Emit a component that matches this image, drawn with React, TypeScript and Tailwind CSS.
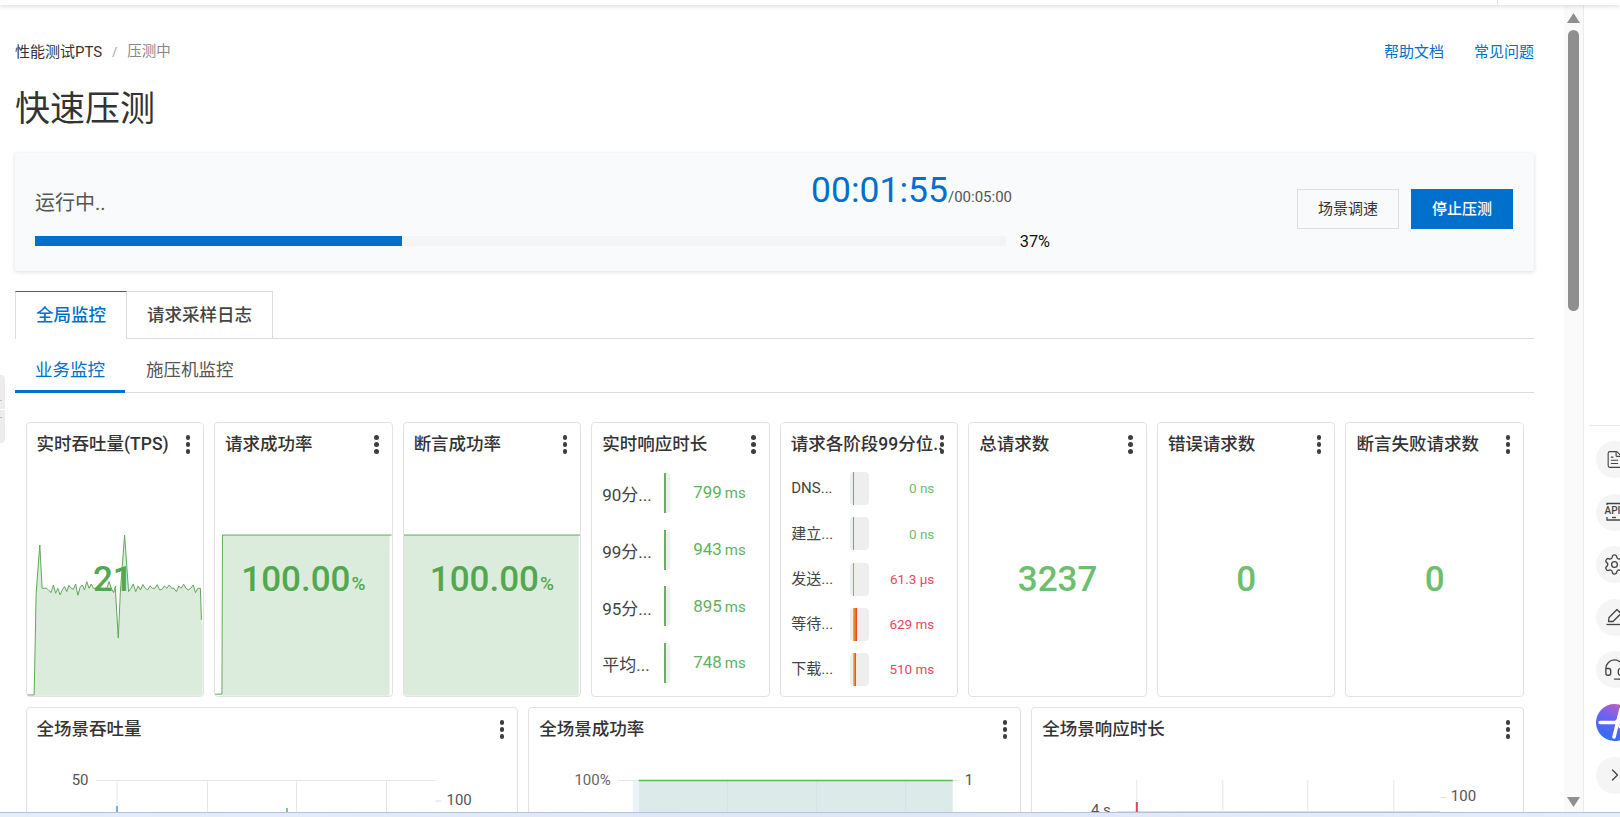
import { ChevronRight, FileText, Headset, Settings } from "lucide-react";

const tpsYs = [925,925,932,938,915,940,925,945,930,920,935,916,925,928,912,946,922,915,930,905,925,912,925,925,925,925,925,925,925,905,925,938,918];
const tpsTail = [925,912,935,918,930,914,925,930,918,925,925,914,930,928,918,925,915,925,925,935,918,925,913,925,930,925,915,938,925];

function buildTps() {
  const pts: [number, number][] = [[77, 1246], [101, 1246], [107, 940], [118, 795], [125, 925]];
  tpsYs.forEach((y, i) => pts.push([132 + i * 6.7, y]));
  pts.push([345, 925], [354, 1075], [360, 940], [373, 765], [385, 935]);
  tpsTail.forEach((y, i) => pts.push([392 + i * 7.2, y]));
  pts.push([601, 925], [604, 1020]);
  return pts.map(([x, y]) => [x / 3 - 27.5, 280 + y / 3 - 424] as [number, number]);
}

function Kebab() {
  return (
    <div className="absolute right-[13px] top-[12px] z-10 flex flex-col gap-[2.5px]">
      <span className="size-[4.5px] rounded-full bg-[#3d3d3d]" />
      <span className="size-[4.5px] rounded-full bg-[#3d3d3d]" />
      <span className="size-[4.5px] rounded-full bg-[#3d3d3d]" />
    </div>
  );
}

function Card({ title, children }: { title: string; children?: React.ReactNode }) {
  return (
    <div className="relative flex h-[275px] min-w-0 flex-col overflow-hidden rounded-[4px] border border-[#e2e2e2] bg-white">
      <div className="relative z-10 h-[41px] shrink-0 whitespace-nowrap pl-[10px] pt-[9px] text-[17.5px] leading-[24px] font-medium text-[#333]">{title}</div>
      <Kebab />
      {children}
    </div>
  );
}

function TpsChart() {
  const pts = buildTps();
  const line = pts.map((p) => p.join(",")).join(" ");
  const fill = `6,272 ${pts.slice(1).map((p) => p.join(",")).join(" ")} 175,200 175,272`;
  return (
    <svg className="absolute inset-0 size-full" viewBox="-1 -1 177 273" fill="none">
      <polygon points={fill} fill="#dcecdc" />
      <polyline points={line} stroke="#5fa857" strokeWidth="1" />
    </svg>
  );
}

function RateChart({ full }: { full?: boolean }) {
  return (
    <svg className="absolute inset-0 size-full" viewBox="-1 -1 177 273" fill="none">
      {full ? (
        <>
          <rect x="-1" y="111" width="175" height="161" fill="#dcecdc" />
          <line x1="-1" y1="111" x2="176" y2="111" stroke="#5fa857" />
        </>
      ) : (
        <>
          <rect x="6.5" y="111" width="167.5" height="161" fill="#dcecdc" />
          <polyline points="-1,270.5 6,270.5 6.5,111 176,111" stroke="#5fa857" />
        </>
      )}
    </svg>
  );
}

function BigValue({ value, unit, color }: { value: string; unit?: string; color: string }) {
  return (
    <div className={`relative flex flex-1 items-center justify-center pb-[2px] font-medium ${color}`}>
      <span className="text-[35px] leading-none">{value}</span>
      {unit && <span className="mt-[9px] ml-[1px] text-[19px] leading-none">{unit}</span>}
    </div>
  );
}

const responseRows = [
  ["90分...", "799"],
  ["99分...", "943"],
  ["95分...", "895"],
  ["平均...", "748"],
];

function ResponseBody() {
  return (
    <div className="flex flex-1 flex-col justify-between pt-[9px] pb-[13px] pl-[10px] pr-[23px]">
      {responseRows.map(([label, value]) => (
        <div key={label} className="flex h-[40px] items-center">
          <span className="mt-[6px] w-[62px] whitespace-nowrap text-[17px] text-[#444]">{label}</span>
          <div className="h-[40px] w-[6px] rounded-[3px] bg-[#efefef]">
            <div className="h-full w-[1.5px] bg-[#6cae64]" />
          </div>
          <span className="ml-auto whitespace-nowrap text-[#62b15e]">
            <span className="text-[17px]">{value}</span>
            <span className="ml-[3px] text-[15px]">ms</span>
          </span>
        </div>
      ))}
    </div>
  );
}

const phaseRows = [
  { label: "DNS...", value: "0 ns", bad: false, bar: "ml-[3px] w-[1px] bg-[#5cb85c]" },
  { label: "建立...", value: "0 ns", bad: false, bar: "ml-[3px] w-[1px] bg-[#5cb85c]" },
  { label: "发送...", value: "61.3 μs", bad: true, bar: "ml-[3px] w-[1px] bg-[#f08a24]" },
  { label: "等待...", value: "629 ms", bad: true, bar: "ml-[3px] w-[3.5px] bg-linear-to-r from-[#f5b41e] to-[#e0352b]" },
  { label: "下载...", value: "510 ms", bad: true, bar: "ml-[2.5px] w-[3.5px] bg-linear-to-r from-[#f5c842] to-[#e0352b]" },
];

function PhaseBody() {
  return (
    <div className="flex flex-1 flex-col justify-between pt-[8px] pb-[10px] pl-[10.5px] pr-[23px]">
      {phaseRows.map((r) => (
        <div key={r.label} className="flex h-[33px] items-center">
          <span className="w-[59px] whitespace-nowrap text-[15px] text-[#444]">{r.label}</span>
          <div className="h-[33px] w-[19px] overflow-hidden rounded-[4px] bg-[#eeeeee]">
            <div className={`h-full ${r.bar}`} />
          </div>
          <span className={`ml-auto whitespace-nowrap text-[13.5px] ${r.bad ? "text-[#e8485f]" : "text-[#6cc06c]"}`}>{r.value}</span>
        </div>
      ))}
    </div>
  );
}

function ThroughputChart() {
  return (
    <svg className="absolute left-0 top-0" width="491" height="273" viewBox="26.5 708 491 273" fill="none">
      <text x="88" y="785" textAnchor="end" fontSize="15" fill="#555">50</text>
      <line x1="95.5" y1="780.5" x2="435" y2="780.5" stroke="#e6e6e6" />
      {[116.5, 207, 296, 386].map((x) => (
        <line key={x} x1={x} y1="780" x2={x} y2="830" stroke="#e6e6e6" />
      ))}
      <line x1="435" y1="801" x2="441" y2="801" stroke="#dddddd" />
      <text x="446" y="805" fontSize="15" fill="#555">100</text>
      <line x1="116.5" y1="806" x2="116.5" y2="830" stroke="#5b8def" strokeWidth="1.5" />
      <line x1="286.5" y1="808" x2="286.5" y2="830" stroke="#5cb85c" strokeWidth="1.5" />
    </svg>
  );
}

function SuccessChart() {
  return (
    <svg className="absolute left-0 top-0" width="491" height="273" viewBox="529.3 708 491 273" fill="none">
      <text x="611" y="785" textAnchor="end" fontSize="15" fill="#666">100%</text>
      <line x1="618" y1="780.5" x2="960" y2="780.5" stroke="#e6e6e6" />
      <rect x="633" y="781" width="6" height="50" fill="#eaf2fc" />
      <rect x="639" y="781" width="314" height="50" fill="#dceaea" />
      {[728, 817, 906].map((x) => (
        <line key={x} x1={x} y1="781" x2={x} y2="830" stroke="#d2e2e2" />
      ))}
      <line x1="639" y1="780.5" x2="953" y2="780.5" stroke="#5cb85c" strokeWidth="1.5" />
      <text x="965" y="785" fontSize="15" fill="#555">1</text>
    </svg>
  );
}

function LatencyChart() {
  return (
    <svg className="absolute left-0 top-0" width="491" height="273" viewBox="1032.2 708 491 273" fill="none">
      {[1137, 1223, 1308, 1394].map((x) => (
        <line key={x} x1={x} y1="780" x2={x} y2="830" stroke="#e6e6e6" />
      ))}
      <line x1="1117" y1="811.5" x2="1440" y2="811.5" stroke="#dddddd" />
      <line x1="1441" y1="797.5" x2="1446" y2="797.5" stroke="#dddddd" />
      <text x="1451" y="801" fontSize="15" fill="#555">100</text>
      <text x="1111" y="815" textAnchor="end" fontSize="15" fill="#555">4 s</text>
      <line x1="1137" y1="802" x2="1137" y2="830" stroke="#e0405a" strokeWidth="2" />
    </svg>
  );
}

function Circle({ children, plain }: { children: React.ReactNode; plain?: boolean }) {
  return (
    <div className={`flex size-[37px] shrink-0 items-center justify-center rounded-full text-[#444] ${plain ? "" : "bg-[#f5f5f5]"}`}>
      {children}
    </div>
  );
}

function ApiIcon() {
  return (
    <svg width="22" height="20" viewBox="0 0 22 20" fill="none">
      <path d="M3 3V1.5h16V18H3v-3" stroke="#444" strokeWidth="1.3" />
      <text x="0.5" y="12" fontSize="10" fontWeight="500" fill="#444">API</text>
      <line x1="8" y1="15.5" x2="12" y2="15.5" stroke="#444" strokeWidth="1.3" />
    </svg>
  );
}

function PenIcon() {
  return (
    <svg width="22" height="22" viewBox="0 0 22 22" fill="none" stroke="#444" strokeWidth="1.3" strokeLinejoin="round">
      <path d="M4.5 15.5L5 11.5L13 3.5L17 7.5L9 15.5Z" />
      <line x1="2.5" y1="18.5" x2="22" y2="18.5" />
    </svg>
  );
}

function LogoIcon() {
  return (
    <svg width="37" height="37" viewBox="0 0 37 37">
      <defs>
        <linearGradient id="spark" x1="0.8" y1="0" x2="0.3" y2="1">
          <stop offset="0" stopColor="#c85fb4" />
          <stop offset="0.45" stopColor="#6f62f0" />
          <stop offset="1" stopColor="#2d6cf5" />
        </linearGradient>
      </defs>
      <circle cx="18.5" cy="18.5" r="18.5" fill="url(#spark)" />
      <path d="M4 18.5H34M25 5L18 33" stroke="#fff" strokeWidth="3.5" strokeLinecap="round" />
      <path d="M20 18L30 9M20 19L32 30" stroke="#fff" strokeWidth="3" strokeLinecap="round" />
    </svg>
  );
}

export default function App() {
  return (
    <div className="relative flex h-[817px] w-[1620px] flex-col overflow-hidden bg-white font-[Roboto,'Noto_Sans_CJK_SC',sans-serif] text-[#333]">
      <div className="relative z-20 h-[5px] shrink-0 bg-white shadow-[0_1px_5px_rgba(0,0,0,0.16)]">
        <div className="absolute left-[1497px] top-0 h-full w-px bg-[#e6e6e6]" />
      </div>

      <div className="absolute left-0 top-[375px] z-10 flex h-[68px] w-[5px] flex-col rounded-r-[4px] bg-[#ececec]">
        <div className="mt-[25px] h-px w-[2px] bg-[#9cc4ea]" />
        <div className="mt-[8px] h-px w-full bg-white" />
        <div className="mt-[7px] h-px w-[2px] bg-[#9cc4ea]" />
      </div>

      <div className="flex min-h-0 flex-1">
        <main className="min-w-0 flex-1 overflow-hidden pl-[15px] pr-[30px] pt-[36px]">
          <div className="flex h-[22px] items-center text-[15px]">
            <span>性能测试PTS</span>
            <span className="ml-[10px] text-[12px] text-[#999]">/</span>
            <span className="ml-[10px] text-[14.5px] text-[#888]">压测中</span>
            <a className="ml-auto mt-[1px] text-[#0070cc]">帮助文档</a>
            <a className="ml-[30px] mt-[1px] text-[#0070cc]">常见问题</a>
          </div>

          <h1 className="mt-[25px] h-[42px] text-[35px] leading-[44px] font-normal text-[#333]">快速压测</h1>

          <section className="mt-[23px] flex h-[118px] rounded-[2px] bg-[#f9fafb] pl-[20px] pr-[21px] pt-[10px] shadow-[0_1px_4px_rgba(0,0,0,0.14)]">
            <div className="w-[1015px]">
              <div className="flex h-[54px] items-center justify-between pr-[38px]">
                <span className="mt-[25px] text-[20px] text-[#555]">运行中..</span>
                <span className="flex items-baseline text-[#0070cc]">
                  <span className="text-[35.5px] leading-[54px]">00:01:55</span>
                  <span className="text-[15px] text-[#555]">/00:05:00</span>
                </span>
              </div>
              <div className="mt-[19px] flex h-[10px] items-center">
                <div className="h-[10px] w-[971px] bg-[#f4f4f4]">
                  <div className="h-full w-[37.8%] bg-[#0070cc]" />
                </div>
                <span className="ml-[14px] mt-[3px] text-[16.3px] text-[#111]">37%</span>
              </div>
            </div>
            <div className="ml-auto mt-[26px] flex gap-[12px] self-start">
              <button className="h-[40px] w-[102px] border border-[#dedede] text-[15px] text-[#333]">场景调速</button>
              <button className="h-[40px] w-[102px] bg-[#0070cc] text-[15px] font-medium text-white">停止压测</button>
            </div>
          </section>

          <div className="mt-[20px] flex h-[48px] border-b border-[#dcdcdc]">
            <div className="-mb-px flex h-[48px] w-[112px] items-center justify-center border-x border-t border-x-[#dcdcdc] border-t-[#0070cc] bg-white text-[17.5px] font-medium text-[#0070cc]">全局监控</div>
            <div className="flex h-[47px] w-[146px] items-center justify-center border-r border-t border-[#dcdcdc] text-[17.5px] font-medium text-[#444]">请求采样日志</div>
          </div>

          <div className="flex h-[54px] items-end border-b border-[#dcdcdc]">
            <div className="-mb-px flex h-[45px] w-[110px] items-center justify-center border-b-[3px] border-[#0070cc] pt-[2px] text-[17.5px] text-[#0070cc]">业务监控</div>
            <div className="-mb-px flex h-[45px] items-center pb-[1px] pl-[21px] text-[17.5px] text-[#555]">施压机监控</div>
          </div>

          <div className="mt-[29px] grid grid-cols-8 gap-[10px] pl-[10.5px] pr-[10px]">
            <Card title="实时吞吐量(TPS)">
              <TpsChart />
              <BigValue value="21" color="text-[#53a84f] pr-[4px]" />
            </Card>
            <Card title="请求成功率">
              <RateChart />
              <BigValue value="100.00" unit="%" color="text-[#53a84f]" />
            </Card>
            <Card title="断言成功率">
              <RateChart full />
              <BigValue value="100.00" unit="%" color="text-[#53a84f]" />
            </Card>
            <Card title="实时响应时长">
              <ResponseBody />
            </Card>
            <Card title="请求各阶段99分位..">
              <PhaseBody />
            </Card>
            <Card title="总请求数">
              <BigValue value="3237" color="text-[#6cbf6c]" />
            </Card>
            <Card title="错误请求数">
              <BigValue value="0" color="text-[#6cbf6c]" />
            </Card>
            <Card title="断言失败请求数">
              <BigValue value="0" color="text-[#6cbf6c]" />
            </Card>
          </div>

          <div className="mt-[10px] grid grid-cols-3 gap-[10px] pl-[10.5px] pr-[10px]">
            <Card title="全场景吞吐量">
              <ThroughputChart />
            </Card>
            <Card title="全场景成功率">
              <SuccessChart />
            </Card>
            <Card title="全场景响应时长">
              <LatencyChart />
            </Card>
          </div>
        </main>

        <div className="flex w-[20px] shrink-0 flex-col items-center border-r border-[#ececec] bg-[#fafafa] pb-[5px] pt-[8px]">
          <svg width="13" height="10" viewBox="0 0 13 10"><path d="M6.5 0L13 10H0Z" fill="#8f8f8f" /></svg>
          <div className="mt-[7px] h-[281px] w-[11px] rounded-full bg-[#8f8f8f]" />
          <svg className="mt-auto" width="13" height="10" viewBox="0 0 13 10"><path d="M0 0H13L6.5 10Z" fill="#8f8f8f" /></svg>
        </div>

        <aside className="flex w-[36px] shrink-0 flex-col overflow-hidden pl-[5px] pt-[420px]">
          <div className="h-px shrink-0 bg-[#ececec]" />
          <div className="mt-[15px] flex flex-col gap-[15.6px] pl-[7px]">
            <Circle><FileText size={19} strokeWidth={1.4} /></Circle>
            <Circle><ApiIcon /></Circle>
            <Circle><Settings size={23} strokeWidth={1.4} /></Circle>
            <Circle><PenIcon /></Circle>
            <Circle><Headset size={23} strokeWidth={1.4} /></Circle>
            <Circle plain><LogoIcon /></Circle>
            <Circle><ChevronRight size={20} strokeWidth={1.6} /></Circle>
          </div>
        </aside>
      </div>

      <div className="relative z-20 h-[5px] shrink-0 border-t border-[#b4c2dc] bg-linear-to-r from-[#e4eefb] via-[#dfe6f6] to-[#e4eefb]" />
    </div>
  );
}
